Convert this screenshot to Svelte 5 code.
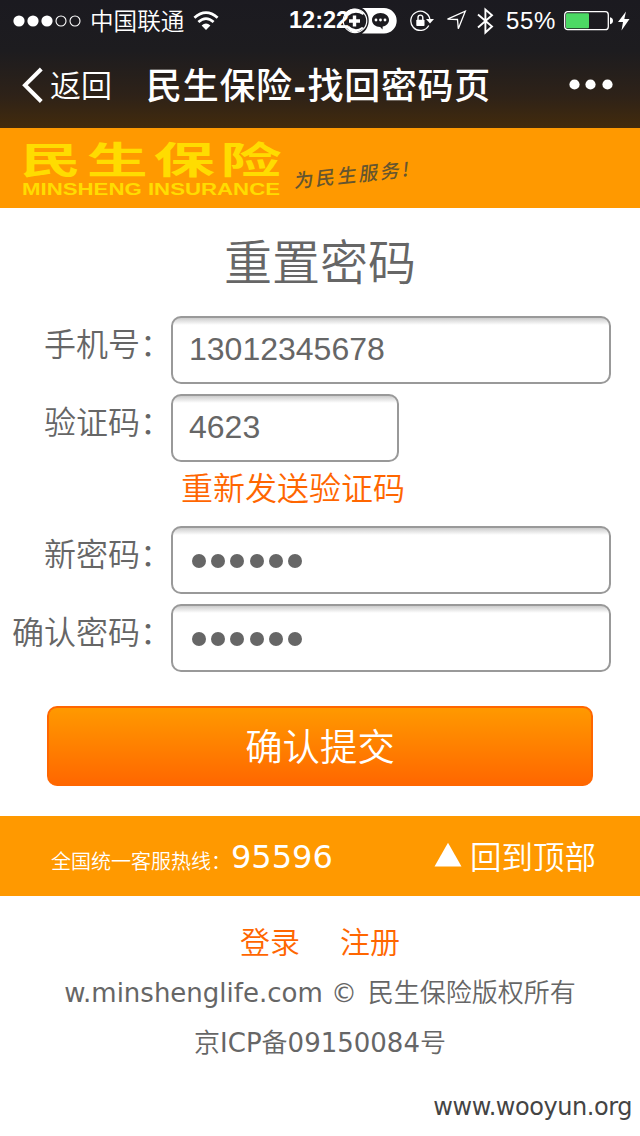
<script>
	let phone = $state('13012345678');
	let code = $state('4623');

	const signal = [true, true, true, false, false];
	const maskLength = 6;
</script>

{#snippet masked(label)}
	<div class="row">
		<span class="label">{label}：</span>
		<div class="field mask" role="textbox" aria-label={label} tabindex="0">
			{#each Array(maskLength) as _}
				<i></i>
			{/each}
		</div>
	</div>
{/snippet}

<div class="screen">
	<div class="top">
		<div class="status">
			<svg class="signal" width="68" height="12" viewBox="0 0 68 12">
				{#each signal as on, i}
					<circle cx={6 + i * 14} cy="6" r={on ? 5.6 : 5} fill={on ? '#fff' : 'none'} stroke="#fff" stroke-width={on ? 0 : 1.1} />
				{/each}
			</svg>
			<span class="carrier">中国联通</span>
			<svg class="wifi" width="26" height="20" viewBox="0 0 26 20">
				<g fill="none" stroke="#fff" stroke-width="2.7">
					<path d="M1.4 6.8Q13-3.4 24.6 6.8" />
					<path d="M5.4 11Q13 4.2 20.6 11" />
				</g>
				<path d="M8.6 14.4Q13 10.6 17.4 14.4L13 19Z" fill="#fff" />
			</svg>
			<span class="time">12:22</span>
			<svg class="pill" width="55" height="26" viewBox="0 0 55 26">
				<path d="M20 0H42a12.7 12.7 0 0 1 0 25.4H20C29 20 29 5 20 0Z" fill="#fff" />
				<circle cx="13" cy="12.8" r="11.8" fill="none" stroke="#fff" stroke-width="1.2" />
				<path d="M2 6Q11-4 22 5L21 7Q13 2 6 8M4 19Q11 29 22 20L20 19Q13 24 7 18" fill="#fff" />
				<path d="M12.5 7.5v11M7 13h11" stroke="#fff" stroke-width="3.4" />
				<path d="M38.5 5c-4.7 0-8.5 3-8.5 7 0 3.9 3.5 6.9 8.2 7l2.3 2.6.2-3c3.7-.8 6.3-3.4 6.3-6.600 0-4-3.800-7-8.500-7Z" fill="#1c1b1f" />
				<g fill="#fff">
					<circle cx="34" cy="12" r="1.4" />
					<circle cx="38.5" cy="12" r="1.4" />
					<circle cx="43" cy="12" r="1.4" />
				</g>
			</svg>
			<svg class="lock" width="24" height="22" viewBox="0 0 24 22">
				<path d="M18.8 15.5A9.6 9.6 0 1 1 19.9 9.500" fill="none" stroke="#fff" stroke-width="1.3" />
				<path d="M16 9h8L20 13.5Z" fill="#fff" />
				<rect x="6.3" y="9.8" width="8.2" height="6.2" rx=".8" fill="#fff" />
				<path d="M8 10V7.5a2.4 2.4 0 0 1 4.800 0V10" fill="none" stroke="#fff" stroke-width="1.4" />
			</svg>
			<svg class="arrow" width="21" height="21" viewBox="0 0 21 21">
				<path d="M1.5 9.2 19.3 1.2 12.3 18.8 11.5 9.5Z" fill="none" stroke="#fff" stroke-width="1.3" />
			</svg>
			<svg class="bluetooth" width="17" height="28" viewBox="0 0 17 28">
				<path d="M1 7.5 15 19.5 8.4 25.5V2.5L15 8.3 1 20.5" fill="none" stroke="#fff" stroke-width="1.9" />
			</svg>
			<span class="percent">55%</span>
			<svg class="battery" width="50" height="20" viewBox="0 0 50 20">
				<rect x=".7" y=".7" width="43.6" height="18" rx="3" fill="none" stroke="#fff" stroke-width="1.3" />
				<rect x="2" y="2.2" width="23" height="15" rx="1" fill="#4cd964" />
				<path d="M46 6.2q3 .6 3 3.5t-3 3.5Z" fill="#fff" />
			</svg>
			<svg class="bolt" width="12" height="20" viewBox="0 0 12 20">
				<path d="M8 .5 0 11h5L3.5 19.5 11.5 8H6.3Z" fill="#fff" />
			</svg>
		</div>

		<div class="nav">
			<svg width="22" height="36" viewBox="0 0 22 36">
				<path d="M19.3 2 3 18.2 19.3 34.5" fill="none" stroke="#fff" stroke-width="4" />
			</svg>
			<span class="back">返回</span>
			<h1>民生保险<b>-</b>找回密码页</h1>
			<svg class="more" width="44" height="12" viewBox="0 0 44 12" fill="#fff">
				<circle cx="5.5" cy="5.500" r="5.1" />
				<circle cx="21.5" cy="5.500" r="5.1" />
				<circle cx="38.5" cy="5.500" r="5.1" />
			</svg>
		</div>
	</div>

	<div class="brand">
		<svg width="420" height="80" viewBox="0 0 420 80">
			<g fill="#ffdc00">
				<text class="logo" transform="translate(20 46) scale(1.65 1)" textLength="158.5">民生保险</text>
				<text class="logo-en" x="22" y="67" textLength="258" lengthAdjust="spacingAndGlyphs">MINSHENG INSURANCE</text>
			</g>
			<text class="slogan" transform="translate(294 60) rotate(-6) skewX(-12)" textLength="115">为民生服务!</text>
		</svg>
	</div>

	<h2>重置密码</h2>

	<form>
		<div class="row">
			<label class="label" for="phone">手机号：</label>
			<input class="field" id="phone" bind:value={phone} />
		</div>
		<div class="row">
			<label class="label" for="code">验证码：</label>
			<input class="field short" id="code" bind:value={code} />
		</div>
		<a class="resend" href="#resend">重新发送验证码</a>
		{@render masked('新密码')}
		{@render masked('确认密码')}
		<button type="button">确认提交</button>
	</form>

	<div class="hotline">
		<span class="hint">全国统一客服热线：</span>
		<span class="number">95596</span>
		<a href="#top">
			<svg width="28" height="25" viewBox="0 0 28 25"><path d="M14 .8 27.5 24.5H.5Z" fill="#fff" /></svg>
			回到顶部
		</a>
	</div>

	<div class="links">
		<a href="#login">登录</a>
		<a href="#register">注册</a>
	</div>
	<p><span class="latin">w.minshenglife.com ©</span> 民生保险版权所有</p>
	<p>京<span class="latin">ICP</span>备<span class="latin">09150084</span>号</p>
	<div class="site">www.wooyun.org</div>
</div>

<style>
	:global(body) {
		background: #fff;
	}

	* {
		box-sizing: border-box;
	}

	.screen {
		width: 640px;
		height: 1136px;
		overflow: hidden;
		background: #fff;
		color: #666;
		font-family: 'Noto Sans CJK SC', sans-serif;
		font-weight: 350;
	}

	a {
		color: #f60;
		text-decoration: none;
	}

	svg {
		display: block;
		flex: none;
	}

	.top {
		height: 128px;
		color: #fff;
		background: linear-gradient(#1b1a20, #1d1c1f 40%, #2e2218 75%, #432b0c);
		font-family: 'Liberation Sans', 'Noto Sans CJK SC', sans-serif;
	}

	.status {
		display: flex;
		align-items: center;
		height: 41px;
		padding-left: 13px;
		white-space: nowrap;
	}
	.carrier {
		width: 94px;
		margin: -2px 0 0 9px;
		font-size: 23.6px;
	}
	.wifi {
		margin-left: 9px;
	}
	.time {
		width: 60px;
		margin-left: 70px;
		font-size: 23.5px;
		font-weight: 700;
	}
	.pill {
		margin-left: -7px;
	}
	.lock {
		margin-left: 13px;
	}
	.arrow {
		margin-left: 12px;
	}
	.bluetooth {
		margin-left: 10px;
	}
	.percent {
		width: 52px;
		margin-left: 12px;
		font-size: 24px;
		letter-spacing: 0.6px;
	}
	.battery {
		margin-left: 6px;
	}
	.bolt {
		margin-left: 4px;
	}

	.nav {
		display: flex;
		align-items: center;
		height: 87px;
		padding: 0 27px 0 22px;
	}
	.back {
		margin: -3px 0 0 6px;
		font-size: 31px;
	}
	.nav h1 {
		margin: -4px 0 0 34px;
		font-size: 36px;
		font-weight: 500;
		letter-spacing: 0.7px;
		white-space: nowrap;
	}
	.nav b {
		margin: 0 1px;
	}
	.more {
		margin-left: auto;
	}

	.brand {
		height: 80px;
		background: #f90;
	}
	.logo {
		font: 700 37px 'Noto Sans CJK SC', sans-serif;
	}
	.logo-en {
		font: 700 16px 'Liberation Sans', sans-serif;
	}
	.slogan {
		fill: #65552f;
		font: 500 19px 'Noto Sans CJK SC', sans-serif;
	}

	h2 {
		margin: 0;
		height: 108px;
		line-height: 102px;
		font-size: 48px;
		font-weight: 350;
		text-align: center;
	}

	.row {
		display: flex;
		height: 68px;
		margin-bottom: 10px;
	}
	.label {
		width: 172px;
		margin-right: -1px;
		line-height: 53px;
		font-size: 32px;
		text-align: right;
		white-space: nowrap;
	}
	.field {
		width: 440px;
		height: 68px;
		padding: 0 16px 2px;
		border: 2px solid #999;
		border-radius: 10px;
		background: linear-gradient(#ccc, #fff 7px);
		color: #666;
		font: 32px 'Liberation Sans', sans-serif;
		outline: 0;
	}
	.short {
		width: 228px;
	}
	.mask {
		display: flex;
		align-items: center;
		gap: 5.4px;
		padding: 2px 0 0 18.5px;
	}
	.mask i {
		width: 14px;
		height: 14px;
		border-radius: 50%;
		background: #666;
	}
	.resend {
		display: block;
		height: 54px;
		padding-left: 181px;
		line-height: 29px;
		font-size: 32px;
	}
	button {
		display: block;
		width: 546px;
		height: 80px;
		margin: 34px 0 30px 47px;
		padding: 0 0 4px;
		border: 2px solid #f60;
		border-bottom: 0;
		border-radius: 10px;
		background: linear-gradient(#f90, #f60);
		color: #fff;
		font: inherit;
		font-size: 37.4px;
	}
	form {
		height: 500px;
	}

	.hotline {
		display: flex;
		align-items: center;
		height: 80px;
		padding: 0 44px 0 51px;
		background: #f90;
		color: #fff;
		white-space: nowrap;
	}
	.hint {
		width: 180px;
		padding-top: 8px;
		font-size: 20px;
	}
	.number {
		font: 400 32px 'DejaVu Sans', sans-serif;
		padding-top: 1px;
	}
	.hotline a {
		display: flex;
		align-items: center;
		gap: 8px;
		margin: -2px 0 0 auto;
		color: #fff;
		font-size: 31.5px;
	}
	.hotline a svg {
		margin-bottom: 2px;
	}

	.links {
		display: flex;
		justify-content: center;
		gap: 40px;
		height: 70px;
		line-height: 89px;
		font-size: 30px;
	}
	p {
		margin: 0;
		height: 50px;
		line-height: 50px;
		font-size: 26px;
		text-align: center;
		white-space: nowrap;
		word-spacing: 5px;
	}
	.latin {
		font-family: 'DejaVu Sans', sans-serif;
		font-weight: 400;
		word-spacing: 0;
	}
	.site {
		padding: 2px 8px 0 0;
		color: #444;
		font: 400 24px/78px 'DejaVu Sans', sans-serif;
		letter-spacing: -0.45px;
		text-align: right;
	}
</style>
